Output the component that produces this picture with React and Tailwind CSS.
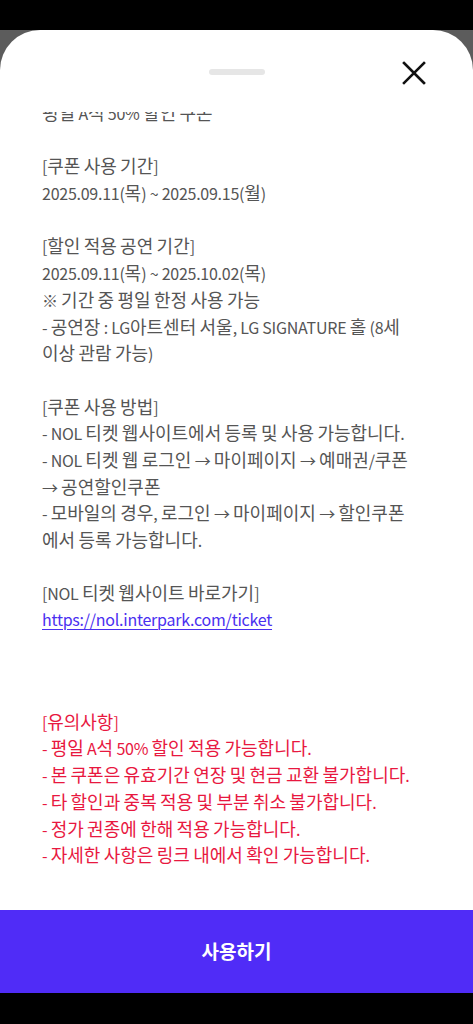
import React from 'react'

const desc = [
  '평일 A석 50% 할인 쿠폰',
  '',
  '[쿠폰 사용 기간]',
  '2025.09.11(목) ~ 2025.09.15(월)',
  '',
  '[할인 적용 공연 기간]',
  '2025.09.11(목) ~ 2025.10.02(목)',
  '※ 기간 중 평일 한정 사용 가능',
  '- 공연장 : LG아트센터 서울, LG SIGNATURE 홀 (8세',
  '이상 관람 가능)',
  '',
  '[쿠폰 사용 방법]',
  '- NOL 티켓 웹사이트에서 등록 및 사용 가능합니다.',
  '- NOL 티켓 웹 로그인 → 마이페이지 → 예매권/쿠폰',
  '→ 공연할인쿠폰',
  '- 모바일의 경우, 로그인 → 마이페이지 → 할인쿠폰',
  '에서 등록 가능합니다.',
  '',
  '[NOL 티켓 웹사이트 바로가기]',
]

const notices = [
  '[유의사항]',
  '- 평일 A석 50% 할인 적용 가능합니다.',
  '- 본 쿠폰은 유효기간 연장 및 현금 교환 불가합니다.',
  '- 타 할인과 중복 적용 및 부분 취소 불가합니다.',
  '- 정가 권종에 한해 적용 가능합니다.',
  '- 자세한 사항은 링크 내에서 확인 가능합니다.',
]

// the device font has wide hangul but narrow latin/digits, so split the runs
function Line({ text }) {
  if (!text) return <p className="h-[26.7px]">{'\u00a0'}</p>
  const parts = text.split(/([가-힣]+)/)
  return (
    <p className="h-[26.7px] whitespace-nowrap">
      {parts.map((part, i) =>
        /[가-힣]/.test(part) ? (
          <span key={i}>{part}</span>
        ) : (
          <span key={i} className="text-[16px] tracking-[-0.25px]">{part}</span>
        )
      )}
    </p>
  )
}

export default function App() {
  return (
    <div
      className="h-[1024px] w-[473px] bg-black flex flex-col overflow-hidden"
      style={{ fontFamily: '"Noto Sans CJK KR", "Noto Sans", sans-serif' }}
    >
      <div className="h-[30px] shrink-0 bg-black" />
      <div className="flex-1 bg-[#5c5c5c] flex flex-col min-h-0">
        <div className="flex-1 bg-white rounded-t-[40px] flex flex-col min-h-0">
          {/* HEADER */}
          <div className="h-[82px] shrink-0 relative">
            <div className="absolute left-1/2 -translate-x-1/2 top-[39px] w-[56px] h-[6px] rounded-full bg-[#e6e6e6]" />
            <button className="absolute right-[46px] top-[30px] w-[26px] h-[26px] flex items-center justify-center">
              <svg width="24" height="24" viewBox="0 0 24 24" fill="none" stroke="#111" strokeWidth="2.6" strokeLinecap="square">
                <path d="M2 2L22 22M22 2L2 22" />
              </svg>
            </button>
          </div>

          {/* BODY */}
          <div className="flex-1 min-h-0 overflow-hidden">
            <div className="-mt-[13px] px-[42px] text-[18px] leading-[26.7px]">
              <div className="text-[#555555]">
                {desc.map((line, i) => (
                  <Line key={i} text={line} />
                ))}
                <p className="h-[26.7px] text-[16px] tracking-[-0.25px]">
                  <a href="#" className="text-[#4a2ff0] underline underline-offset-[3px] decoration-1">
                    https://nol.interpark.com/ticket
                  </a>
                </p>
              </div>
              <div className="mt-[75px] text-[#e8183f]">
                {notices.map((line, i) => (
                  <Line key={i} text={line} />
                ))}
              </div>
            </div>
          </div>

          {/* FOOTER BUTTON */}
          <button className="h-[83px] shrink-0 w-full bg-[#502cf7] text-white text-[19px] font-bold flex items-center justify-center">
            사용하기
          </button>
        </div>
      </div>
      <div className="h-[31px] shrink-0 bg-black" />
    </div>
  )
}
